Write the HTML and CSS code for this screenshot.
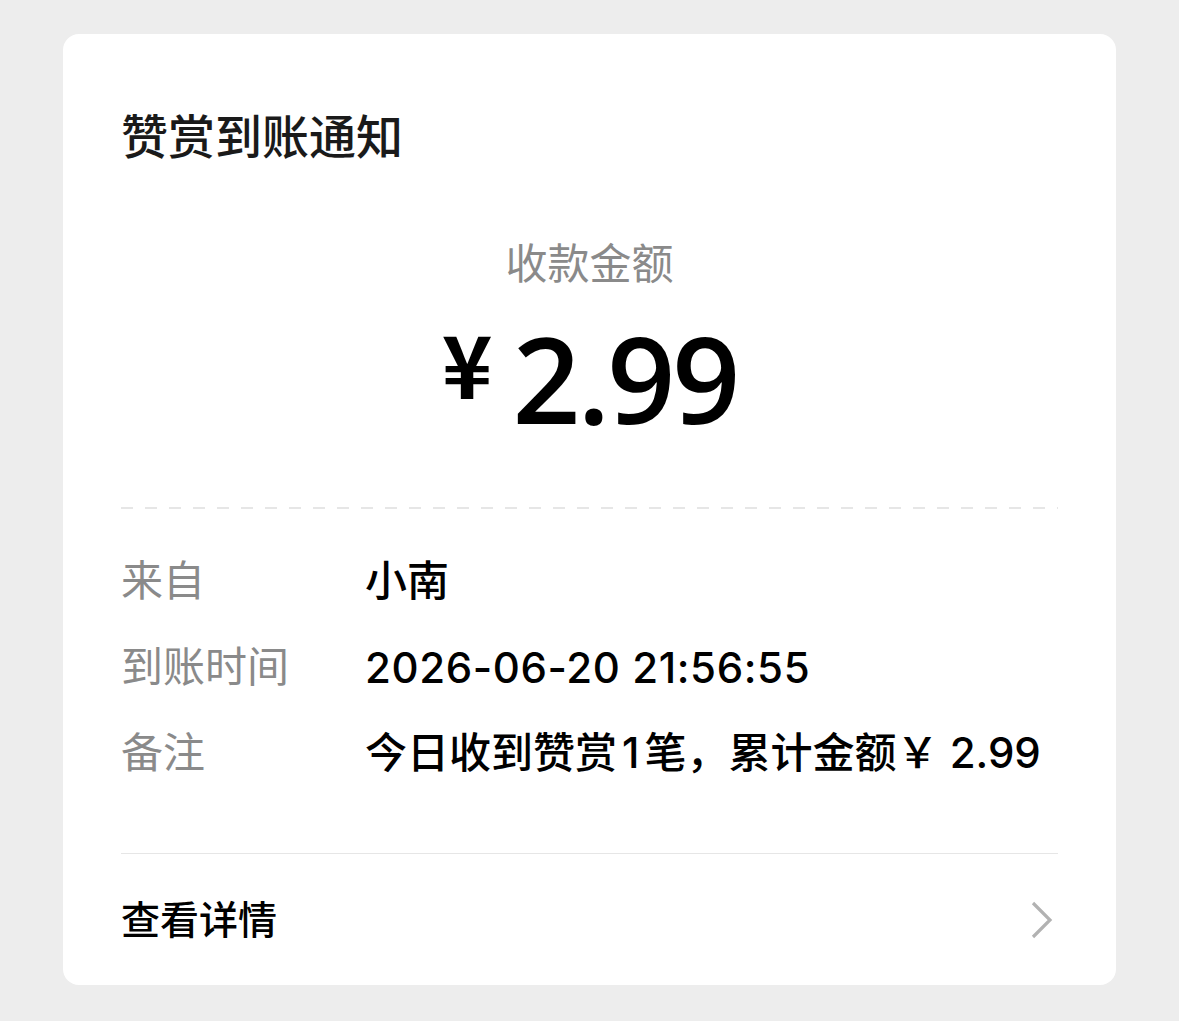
FILE: index.html
```html
<!DOCTYPE html>
<html lang="zh-CN">
<head>
    <meta charset="UTF-8">
    <meta name="viewport" content="width=device-width, initial-scale=1.0">
    <title>赞赏到账通知</title>
    <link rel="stylesheet" href="styles.css">
</head>
<body>

    <!-- 通知卡片 -->
    <div class="card">
        <div class="card-title">赞赏到账通知</div>

        <div class="amount-label">收款金额</div>
        <div class="amount">
            <span class="amount-yen">¥</span>
            <span class="amount-num">2.99</span>
        </div>

        <div class="dash-line"></div>

        <div class="info-list">
            <div class="info-row">
                <div class="info-key">来自</div>
                <div class="info-value">小南</div>
            </div>
            <div class="info-row">
                <div class="info-key">到账时间</div>
                <div class="info-value info-time">2026-06-20 21:56:55</div>
            </div>
            <div class="info-row">
                <div class="info-key">备注</div>
                <div class="info-value">今日收到赞赏<span class="count">1</span>笔，累计金额￥ 2.99</div>
            </div>
        </div>

        <div class="card-footer">
            <span class="footer-text">查看详情</span>
            <svg class="arrow" width="24" height="40" viewBox="0 0 24 40">
                <path d="M3 3 L20 20 L3 37" fill="none" stroke="#b2b2b2" stroke-width="3.2"/>
            </svg>
        </div>
    </div>

</body>
</html>
```

FILE: styles.css
```css
body {
    margin: 0;
    padding: 0;
    background-color: #ededed;
    font-family: "Noto Sans CJK SC", "Noto Sans", sans-serif;
}

.card {
    margin: 34px 63px;
    width: 1053px;
    height: 951px;
    box-sizing: border-box;
    padding: 0 58px;
    background-color: #fff;
    border-radius: 16px;
    display: flex;
    flex-direction: column;
}

.card-title {
    margin-top: 70px;
    line-height: 60px;
    font-size: 47px;
    font-weight: 500;
    color: #1a1a1a;
}

.amount-label {
    margin-top: 67px;
    line-height: 60px;
    font-size: 42px;
    color: #8a8a8a;
    text-align: center;
}

.amount {
    margin-top: 22px;
    height: 130px;
    display: flex;
    justify-content: center;
    align-items: center;
    color: #000;
}

.amount-yen {
    font-family: "Noto Sans CJK SC", sans-serif;
    font-size: 86px;
    font-weight: 700;
    line-height: 90px;
    margin-right: 20px;
    margin-bottom: 32px;
}

.amount-num {
    font-family: "Open Sans", "Noto Sans", sans-serif;
    font-size: 119px;
    font-weight: 600;
    line-height: 130px;
    letter-spacing: -3px;
}

.dash-line {
    margin-top: 64px;
    height: 2px;
    background-image: repeating-linear-gradient(to right, #e6e6e6 0, #e6e6e6 12px, transparent 12px, transparent 24px);
}

.info-list {
    margin-top: 25px;
}

.info-row {
    display: flex;
    height: 86px;
    align-items: center;
    font-size: 42px;
}

.info-key {
    width: 244px;
    color: #8a8a8a;
}

.info-value {
    font-family: Inter, "Noto Sans CJK SC", sans-serif;
    color: #000;
    font-weight: 500;
}

.info-time {
    margin-top: 9px;
    letter-spacing: 0.6px;
}

.count {
    padding: 0 5px;
}

.card-footer {
    margin-top: 61px;
    padding-bottom: 5px;
    border-top: 1px solid #e6e6e6;
    flex-grow: 1;
    display: flex;
    align-items: center;
    justify-content: space-between;
}

.footer-text {
    font-size: 39px;
    font-weight: 500;
    color: #000;
}

.arrow {
    margin-right: 4px;
    margin-top: 5px;
}
```
